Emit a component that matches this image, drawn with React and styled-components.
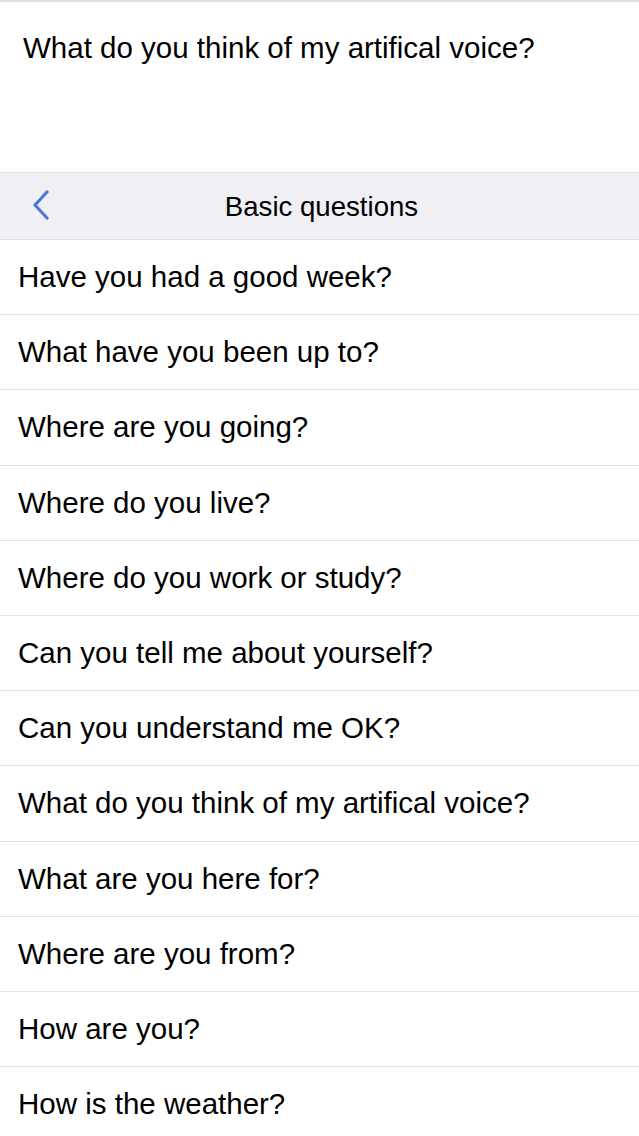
import React from 'react'
import styled, { createGlobalStyle } from 'styled-components'

const GlobalStyle = createGlobalStyle`
  html, body {
    margin: 0;
    padding: 0;
    background: #ffffff;
  }
  body {
    font-family: "Liberation Sans", Arial, sans-serif;
    color: #000000;
    -webkit-font-smoothing: antialiased;
  }
`

const Screen = styled.div`
  width: 639px;
  height: 1136px;
  overflow: hidden;
  background: #ffffff;
  border-top: 2px solid #e2e1e6;
  box-sizing: border-box;
`

const Preview = styled.div`
  height: 170px;
  padding: 29px 23px 0;
  box-sizing: border-box;
  font-size: 29.5px;
  line-height: 34px;
`

const NavBar = styled.div`
  position: relative;
  height: 68px;
  display: flex;
  align-items: center;
  justify-content: center;
  background: #efeff4;
  border-top: 1px solid #e2e2e8;
  border-bottom: 1px solid #dedee3;
  box-sizing: border-box;
`

const BackButton = styled.button`
  position: absolute;
  left: 26px;
  top: 50%;
  transform: translateY(-50%);
  border: 0;
  background: none;
  padding: 4px;
  display: flex;
  cursor: pointer;
`

const Title = styled.h1`
  margin: 0 0 0 4px;
  font-size: 27.6px;
  font-weight: 400;
  line-height: 1;
  padding-top: 2px;
`

const List = styled.ul`
  list-style: none;
  margin: 0;
  padding: 0;
`

const Row = styled.li`
  height: 75.2px;
  display: flex;
  align-items: center;
  padding: 0 18px;
  border-bottom: 1px solid #e3e3e5;
  box-sizing: border-box;
  font-size: 29.5px;
`

const questions = [
  'Have you had a good week?',
  'What have you been up to?',
  'Where are you going?',
  'Where do you live?',
  'Where do you work or study?',
  'Can you tell me about yourself?',
  'Can you understand me OK?',
  'What do you think of my artifical voice?',
  'What are you here for?',
  'Where are you from?',
  'How are you?',
  'How is the weather?',
]

const Chevron = () => (
  <svg width="22" height="32" viewBox="0 0 22 32">
    <path d="M17 2 L5 15 L17 28" fill="none" stroke="#4b79db" strokeWidth="3.2" strokeLinecap="round" strokeLinejoin="round" />
  </svg>
)

export default function App() {
  return (
    <>
      <GlobalStyle />
      <Screen>
        <Preview>What do you think of my artifical voice?</Preview>
        <NavBar>
          <BackButton aria-label="Back"><Chevron /></BackButton>
          <Title>Basic questions</Title>
        </NavBar>
        <List>
          {questions.map((q, i) => <Row key={i}>{q}</Row>)}
        </List>
      </Screen>
    </>
  )
}
